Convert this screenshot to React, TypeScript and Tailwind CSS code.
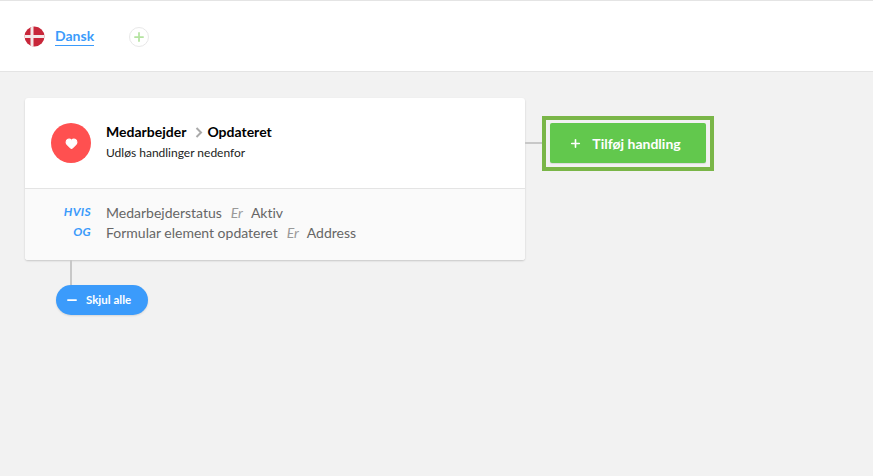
import { Heart, Minus, Plus } from "lucide-react"

const font = "font-['Lato','Liberation_Sans',sans-serif] [font-variant-ligatures:none]"

function DanishFlag() {
    return (
        <svg width="21" height="21" viewBox="0 0 21 21" className="shrink-0">
            <defs>
                <clipPath id="flag-clip">
                    <circle cx="10.5" cy="10.5" r="10" />
                </clipPath>
            </defs>
            <g clipPath="url(#flag-clip)">
                <rect width="21" height="21" fill="#c8273a" />
                <rect x="6.5" width="3" height="21" fill="#f5e9e9" />
                <rect y="9" width="21" height="3" fill="#f5e9e9" />
            </g>
        </svg>
    )
}

function Condition({ label, field, value }: { label: string; field: string; value: string }) {
    return (
        <div className="flex h-5 items-center text-[14px] text-[#666]">
            <span className="w-[66px] text-right text-[12px] font-bold italic tracking-[0.3px] text-[#3b9bfb]">{label}</span>
            <span className="ml-[15px]">{field}</span>
            <span className="ml-[9px] italic text-[#999]">Er</span>
            <span className="ml-[8px]">{value}</span>
        </div>
    )
}

export default function App() {
    return (
        <div className={`${font} flex h-[476px] w-[873px] flex-col overflow-hidden bg-[#f2f2f2]`}>
            <header className="flex h-[72px] shrink-0 items-center border-y border-[#e4e4e4] bg-white pl-[24px] pt-[1px]">
                <DanishFlag />
                <span className="ml-[10px] border-b border-[#3b9bfb] text-[14px] font-bold leading-[18px] text-[#3b9bfb]">
                    Dansk
                </span>
                <span className="ml-[35px] flex h-5 w-5 items-center justify-center rounded-full border border-[#e8e8e8]">
                    <Plus size={14} strokeWidth={3} className="text-[#b4e3a0]" />
                </span>
            </header>

            <main className="flex items-start pl-[25px] pt-[26px]">
                <div className="flex w-[500px] shrink-0 flex-col">
                    <section className="overflow-hidden rounded-[3px] bg-white shadow-[0_1px_2px_rgba(0,0,0,0.18)]">
                        <div className="flex h-[91px] items-center border-b border-[#e4e4e4] pl-[26px]">
                            <span className="flex h-10 w-10 items-center justify-center rounded-full bg-[#ff5050]">
                                <Heart size={13} fill="white" className="text-white" />
                            </span>
                            <div className="ml-[15px] -mt-[3px]">
                                <div className="flex items-center text-[14px] font-bold leading-[20px] text-black">
                                    Medarbejder
                                    <svg width="8" height="11" viewBox="0 0 8 11" className="ml-[9px] mr-[4px]">
                                        <path d="M1.5 1 L6 5.5 L1.5 10" fill="none" stroke="#aaa" strokeWidth="2" />
                                    </svg>
                                    Opdateret
                                </div>
                                <div className="mt-[3px] text-[12px] leading-[16px] text-[#222]">Udløs handlinger nedenfor</div>
                            </div>
                        </div>
                        <div className="h-[71px] bg-[#fafafa] pt-[13px]">
                            <Condition label="HVIS" field="Medarbejderstatus" value="Aktiv" />
                            <Condition label="OG" field="Formular element opdateret" value="Address" />
                        </div>
                    </section>
                    <div className="ml-[45px] h-[25px] w-[2px] bg-[#c8c8c8]" />
                    <button className="ml-[31px] flex h-[30px] w-[92px] items-center rounded-full bg-[#3b9bfb] pl-[9px] text-[11.5px] font-bold text-white shadow-[0_1px_2px_rgba(0,0,0,0.12)]">
                        <Minus size={14} strokeWidth={3} />
                        <span className="ml-[7px]">Skjul alle</span>
                    </button>
                </div>

                <div className="mt-[44px] h-[2px] w-[17px] shrink-0 bg-[#c8c8c8]" />

                <div className="mt-[18px] border-[4px] border-[#7ab648] px-[4px] pb-[4px] pt-[3px]">
                    <button className="flex h-[40px] w-[156px] items-center justify-center rounded-[2px] bg-[#62c84d] pr-[6px] text-[14px] font-bold text-white shadow-[0_1px_1px_rgba(0,0,0,0.1)]">
                        <Plus size={13} strokeWidth={3} />
                        <span className="ml-[10px]">Tilføj handling</span>
                    </button>
                </div>
            </main>
        </div>
    )
}
